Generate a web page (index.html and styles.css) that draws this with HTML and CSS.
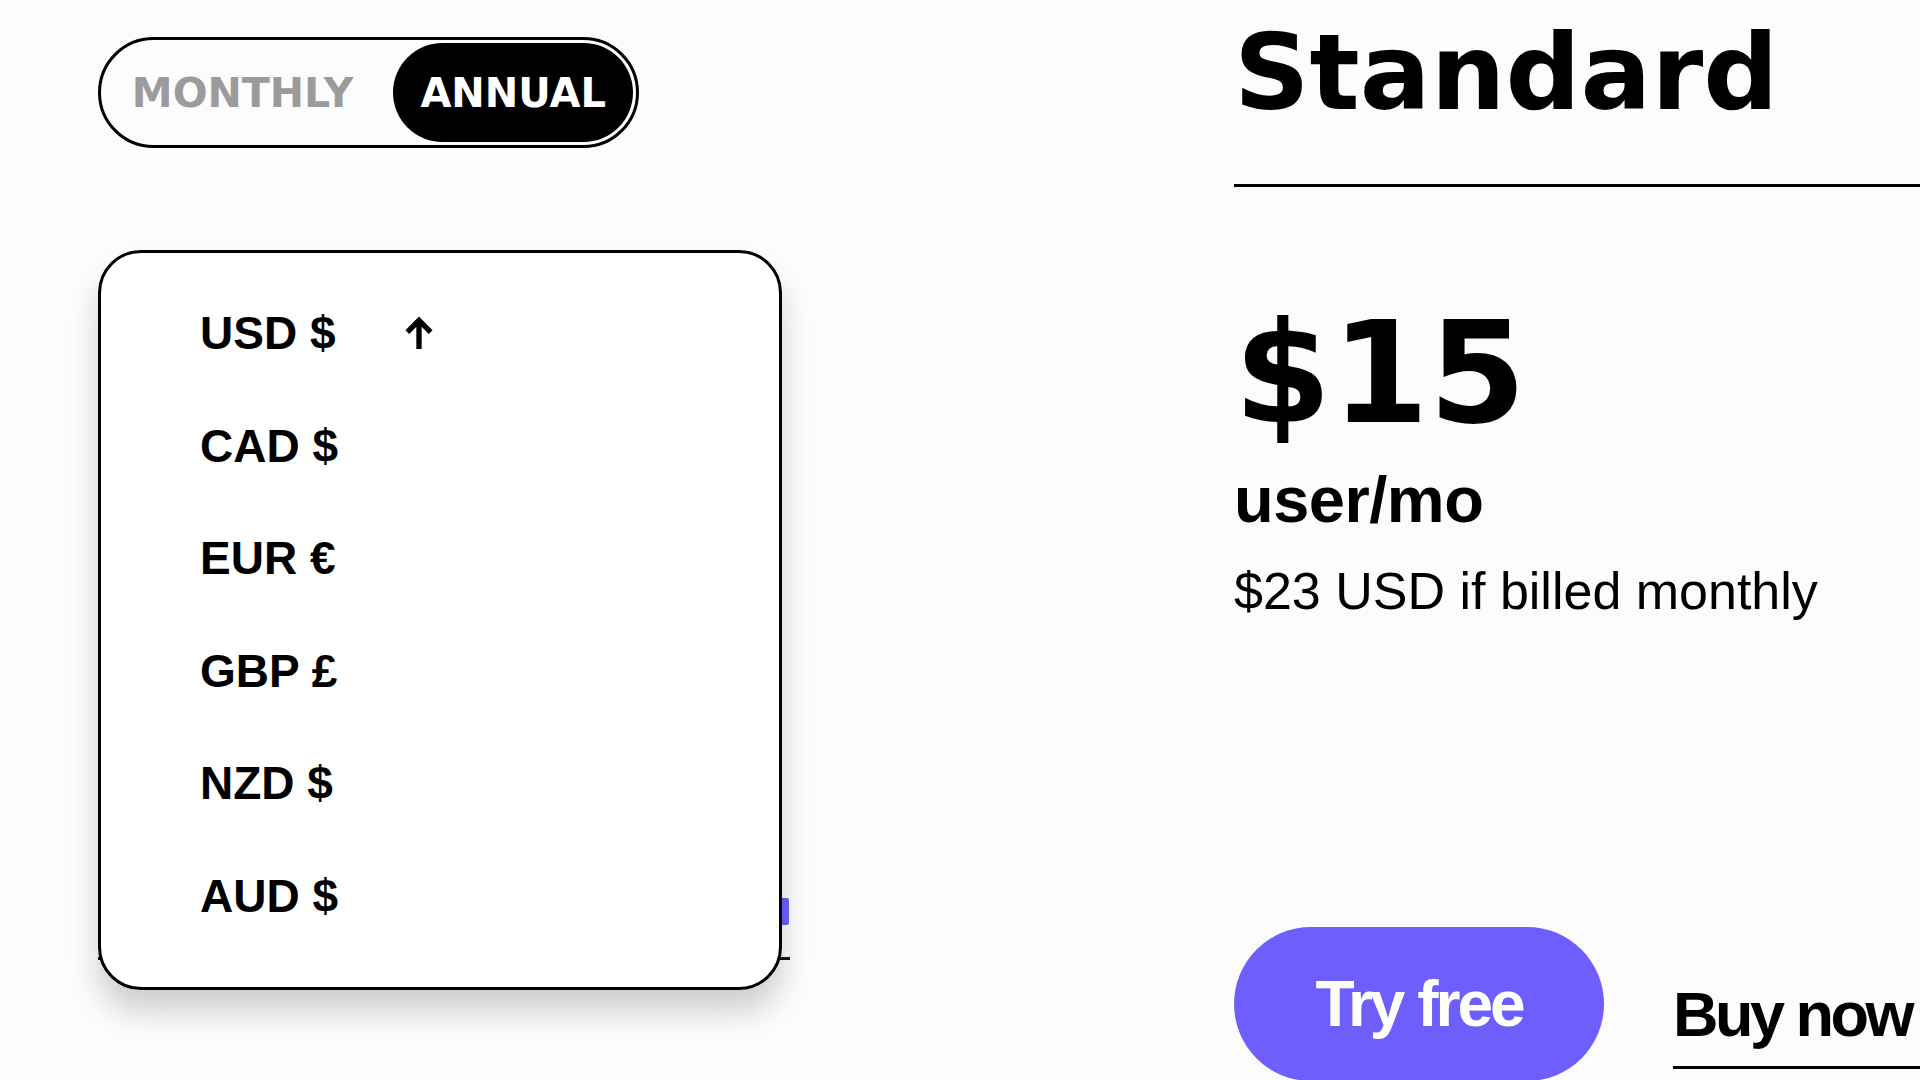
FILE: index.html
```html
<!DOCTYPE html>
<html lang="en">
<head>
    <meta charset="UTF-8">
    <meta name="viewport" content="width=device-width, initial-scale=1.0">
    <title>Pricing - Standard</title>
    <link rel="stylesheet" href="styles.css">
</head>
<body>
    <main class="pricing">
        <section class="controls">
            <div class="billing-toggle">
                <button class="toggle-option">MONTHLY</button>
                <button class="toggle-option active">ANNUAL</button>
            </div>

            <div class="currency-field">
                <span class="currency-caret"></span>
            </div>

            <ul class="currency-menu">
                <li class="currency-item selected">
                    USD $
                    <svg class="sort-arrow" viewBox="0 0 30 34" width="30" height="33" aria-hidden="true">
                        <path d="M15 34V5M3 16.5L15 4.5L27 16.5" fill="none" stroke="#000" stroke-width="5.5"/>
                    </svg>
                </li>
                <li class="currency-item">CAD $</li>
                <li class="currency-item">EUR €</li>
                <li class="currency-item">GBP £</li>
                <li class="currency-item">NZD $</li>
                <li class="currency-item">AUD $</li>
            </ul>
        </section>

        <section class="plan">
            <h2 class="plan-name">Standard</h2>
            <hr class="plan-rule">
            <div class="plan-price">$15</div>
            <div class="plan-unit">user/mo</div>
            <p class="plan-note">$23 USD if billed monthly</p>

            <div class="plan-actions">
                <a class="btn-try" href="#">Try free</a>
                <a class="btn-buy" href="#">Buy now</a>
            </div>
        </section>
    </main>
</body>
</html>
```

FILE: styles.css
```css
* {
    margin: 0;
    padding: 0;
    box-sizing: border-box;
}

body {
    font-family: 'Liberation Sans', Arial, sans-serif;
    background: #fdfcfd;
    color: #000;
    width: 1920px;
    height: 1080px;
    overflow: hidden;
}

.pricing {
    display: flex;
    align-items: flex-start;
    gap: 444px;
    padding-left: 98px;
    height: 100%;
    overflow: hidden;
}

/* left column */

.controls {
    position: relative;
    width: 692px;
    flex-shrink: 0;
    margin-top: 37px;
}

.billing-toggle {
    display: flex;
    width: 541px;
    height: 111px;
    padding: 3px;
    border: 3px solid #000;
    border-radius: 56px;
}

.toggle-option {
    font-family: 'DejaVu Sans', sans-serif;
    font-weight: bold;
    font-size: 40px;
    color: #9b9b9b;
    background: none;
    border: none;
    border-radius: 50px;
    cursor: pointer;
}

.toggle-option:first-child {
    flex: 1;
    padding-right: 12px;
    font-size: 41px;
}

.toggle-option.active {
    background: #000;
    color: #fff;
    padding: 0 27px;
}

.currency-field {
    display: flex;
    justify-content: flex-end;
    height: 63px;
    margin-top: 749px;
    border-bottom: 3px solid #111;
}

.currency-caret {
    width: 26px;
    height: 27px;
    margin-top: 1px;
    margin-right: 1px;
    background: #6e5ffd;
    border-radius: 2px;
}

.currency-menu {
    position: absolute;
    top: 213px;
    left: 0;
    width: 684px;
    height: 740px;
    padding: 24px 0 0 99px;
    list-style: none;
    background: #fff;
    border: 3px solid #000;
    border-radius: 43px;
    box-shadow: 0 22px 30px rgba(0, 0, 0, 0.18);
}

.currency-item {
    font-weight: bold;
    font-size: 46px;
    line-height: 112.5px;
    cursor: pointer;
}

.sort-arrow {
    margin-left: 56px;
    vertical-align: baseline;
}

/* right column */

.plan {
    flex: 1;
    min-width: 0;
    padding-top: 21px;
}

.plan-name {
    font-family: 'DejaVu Sans', sans-serif;
    font-weight: bold;
    font-size: 105px;
    line-height: 1;
}

.plan-rule {
    margin-top: 58px;
    border: none;
    border-top: 3px solid #000;
}

.plan-price {
    font-family: 'DejaVu Sans', sans-serif;
    font-weight: bold;
    font-size: 140px;
    line-height: 1;
    margin-top: 117px;
}

.plan-unit {
    font-weight: bold;
    font-size: 65px;
    line-height: 1;
    letter-spacing: -0.5px;
    margin-top: 23px;
}

.plan-note {
    font-size: 52px;
    line-height: 1;
    margin-top: 33px;
}

.plan-actions {
    display: flex;
    align-items: flex-start;
    gap: 69px;
    margin-top: 310px;
}

.btn-try {
    display: flex;
    align-items: center;
    justify-content: center;
    width: 370px;
    height: 154px;
    flex-shrink: 0;
    font-weight: bold;
    font-size: 64px;
    letter-spacing: -3px;
    color: #fff;
    text-decoration: none;
    background: #6e5ffd;
    border-radius: 77px;
}

.btn-buy {
    flex-shrink: 0;
    margin-top: 56px;
    padding: 0 60px 20px 0;
    font-weight: bold;
    font-size: 63px;
    line-height: 1;
    letter-spacing: -3.5px;
    color: #000;
    text-decoration: none;
    border-bottom: 3px solid #000;
}
```
